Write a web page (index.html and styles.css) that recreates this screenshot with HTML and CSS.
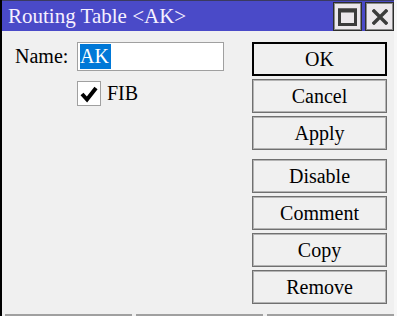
FILE: index.html
```html
<!DOCTYPE html>
<html lang="en">
<head>
    <meta charset="UTF-8">
    <meta name="viewport" content="width=device-width, initial-scale=1.0">
    <title>Routing Table &lt;AK&gt;</title>
    <link rel="stylesheet" href="styles.css">
</head>
<body>
    <div class="window">
        <div class="titlebar">
            <span class="title">Routing Table &lt;AK&gt;</span>
            <div class="title-buttons">
                <button class="title-btn" aria-label="Maximize">
                    <svg width="19" height="18" viewBox="0 0 19 18">
                        <rect x="1.5" y="2" width="16" height="14.5" fill="none" stroke="#3c3c3c" stroke-width="3"/>
                        <rect x="0" y="0.5" width="19" height="4" fill="#3c3c3c"/>
                    </svg>
                </button>
                <button class="title-btn" aria-label="Close">
                    <svg width="16" height="16" viewBox="0 0 16 16">
                        <path d="M2 2 L14 14 M14 2 L2 14" stroke="#3c3c3c" stroke-width="3.4" stroke-linecap="square"/>
                    </svg>
                </button>
            </div>
        </div>

        <div class="content">
            <div class="form">
                <div class="row">
                    <label class="label">Name:</label>
                    <div class="field"><span class="selected">AK</span></div>
                </div>
                <div class="row check-row">
                    <span class="checkbox">
                        <svg width="20" height="20" viewBox="0 0 20 20">
                            <path d="M3 10 L8 15.5 L17 4" fill="none" stroke="#000" stroke-width="4"/>
                        </svg>
                    </span>
                    <span class="check-label">FIB</span>
                </div>
            </div>

            <div class="buttons">
                <button class="btn default">OK</button>
                <button class="btn">Cancel</button>
                <button class="btn">Apply</button>
                <button class="btn spaced">Disable</button>
                <button class="btn">Comment</button>
                <button class="btn">Copy</button>
                <button class="btn">Remove</button>
            </div>
        </div>

        <div class="statusbar">
            <div class="status-cell"></div>
            <div class="status-cell"></div>
            <div class="status-cell"></div>
        </div>
    </div>
</body>
</html>
```

FILE: styles.css
```css
body {
    margin: 0;
    font-family: "Liberation Serif", "Times New Roman", serif;
    background: #f0f0f0;
}
.window {
    width: 397px;
    height: 316px;
    display: flex;
    flex-direction: column;
    box-sizing: border-box;
    border-left: 2px solid #000;
    border-right: 3px solid #f7f7f7;
    background: #f0f0f0;
}
.titlebar {
    height: 31px;
    box-sizing: border-box;
    border-top: 1px solid #3a3a60;
    background: #4a4ac8;
    display: flex;
    align-items: center;
    justify-content: space-between;
    padding-left: 6px;
}
.title {
    color: #f6f0ff;
    font-size: 21px;
    line-height: 30px;
    margin-top: -1px;
}
.title-buttons {
    display: flex;
    gap: 3px;
    align-self: stretch;
    padding-top: 1px;
}
.title-btn {
    width: 29px;
    height: 29px;
    padding: 0;
    background: #ece8ec;
    border: 1px solid #2e2e2e;
    box-shadow: inset 0 0 0 1px #8a8a8a;
    display: flex;
    align-items: center;
    justify-content: center;
}
.content {
    flex: 1;
    display: flex;
}
.form {
    flex: 1;
    padding: 11px 0 0 13px;
}
.row {
    display: flex;
    align-items: center;
}
.label {
    width: 62px;
    font-size: 20px;
    color: #000;
}
.field {
    width: 147px;
    height: 29px;
    box-sizing: border-box;
    border: 1px solid #a0a0a0;
    background: #fff;
    display: flex;
    align-items: center;
    padding-left: 2px;
}
.selected {
    background: #0078d7;
    color: #fff;
    font-size: 20px;
    line-height: 25px;
    padding-right: 2px;
}
.check-row {
    margin-top: 10px;
    padding-left: 62px;
}
.checkbox {
    width: 24px;
    height: 25px;
    box-sizing: border-box;
    border: 1px solid #a0a0a0;
    background: #fff;
    display: flex;
    align-items: center;
    justify-content: center;
}
.check-label {
    font-size: 20px;
    margin-left: 6px;
}
.buttons {
    width: 135px;
    margin-right: 7px;
    padding-top: 11px;
    display: flex;
    flex-direction: column;
    gap: 3px;
}
.btn {
    height: 34px;
    background: #f0f0f0;
    border: 1px solid #707070;
    box-shadow: inset 0 0 0 1px #b4b4b4;
    font-family: "Liberation Serif", "Times New Roman", serif;
    font-size: 20px;
    color: #000;
    padding: 0;
}
.btn.default {
    border: 2px solid #000;
    box-shadow: none;
}
.btn.spaced {
    margin-top: 6px;
}
.statusbar {
    height: 2px;
    display: flex;
    gap: 4px;
    padding-left: 3px;
}
.status-cell {
    flex: 1;
    background: #a0a0a0;
}
```
